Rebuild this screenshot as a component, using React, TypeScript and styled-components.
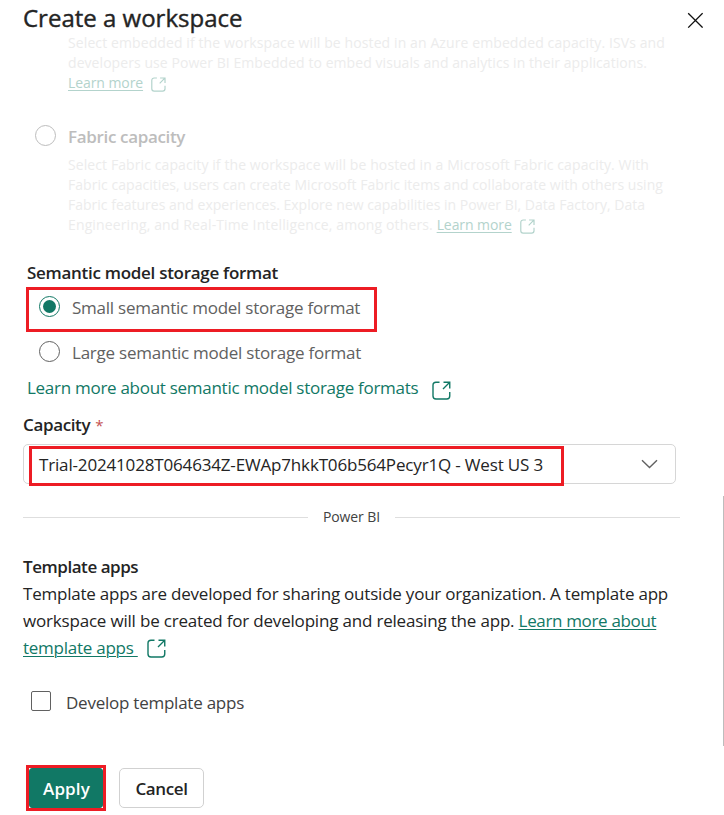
import React from 'react';
import styled, { createGlobalStyle } from 'styled-components';

const GlobalStyle = createGlobalStyle`
  * { box-sizing: border-box; }
  body { margin: 0; background: #fff; }
`;

const GREEN = '#117865';
const RED = '#ed1c24';

const Panel = styled.main`
  position: relative;
  width: 724px;
  height: 815px;
  overflow: hidden;
  display: flex;
  flex-direction: column;
  background: #fff;
  color: #242424;
  font-family: 'Open Sans', 'Noto Sans', sans-serif;
  font-size: 17px;
  line-height: 27px;
`;

const Header = styled.header`
  display: flex;
  justify-content: space-between;
  height: 33px;
  padding: 1px 21px 0 23px;
`;

const Title = styled.h1`
  margin: 0;
  font-size: 24px;
  font-weight: 500;
  line-height: 33px;
  white-space: nowrap;
  -webkit-text-stroke: 0.4px #242424;
`;

const CloseButton = styled.button`
  width: 16px;
  height: 16px;
  margin-top: 11px;
  padding: 0;
  border: 0;
  background: none;
  svg { display: block; }
`;

const Line = styled.span<{ $spacing?: number }>`
  display: block;
  white-space: pre;
  letter-spacing: ${p => p.$spacing ?? 0}px;
`;

const Run = styled.span<{ $spacing: number }>`
  letter-spacing: ${p => p.$spacing}px;
`;

const Description = styled.div`
  margin-left: 68px;
  font-size: 14px;
  line-height: 20px;
  color: #ececec;
`;

const Link = styled.a<{ $faded?: boolean; $plain?: boolean; $spacing: number }>`
  color: ${p => (p.$faded ? '#b3d3cc' : GREEN)};
  letter-spacing: ${p => p.$spacing}px;
  text-decoration: ${p => (p.$plain ? 'none' : 'underline')};
  text-decoration-thickness: 1px;
  text-underline-offset: 2px;
`;

const IconSvg = styled.svg<{ $gap: number; $drop: number }>`
  display: inline-block;
  margin-left: ${p => p.$gap}px;
  margin-bottom: -${p => p.$drop}px;
  vertical-align: baseline;
`;

const FabricOption = styled.div`
  display: flex;
  margin-top: 30px;
  margin-bottom: 5px;
  padding-left: 35px;
  color: #bdbdbd;
  font-weight: 600;
`;

const RadioDot = styled.span<{ $state?: 'checked' | 'faded'; $top: number }>`
  flex: none;
  display: grid;
  place-items: center;
  width: 21px;
  height: 21px;
  margin-top: ${p => p.$top}px;
  margin-right: 12px;
  border: 1px solid ${p => (p.$state === 'checked' ? GREEN : p.$state === 'faded' ? '#bdbdbd' : '#616161')};
  border-radius: 50%;
  &::after {
    content: '';
    width: 13px;
    height: 13px;
    border-radius: 50%;
    background: ${p => (p.$state === 'checked' ? GREEN : 'transparent')};
  }
`;

const Heading = styled.h2<{ $left: number; $top: number; $spacing: number }>`
  height: 27px;
  margin: ${p => p.$top}px 0 0 ${p => p.$left}px;
  font-size: 17px;
  font-weight: 600;
  line-height: 27px;
  letter-spacing: ${p => p.$spacing}px;
`;

const Required = styled.span`
  margin-left: 5px;
  color: #c4504f;
  font-weight: 400;
  font-size: 15px;
  line-height: 1;
`;

const HighlightedRadio = styled.label`
  display: flex;
  width: 351px;
  height: 45px;
  margin: 1px 0 0 26px;
  padding: 4px 0 0 10px;
  border: 3px solid ${RED};
  color: #616161;
`;

const RadioRow = styled.label`
  display: flex;
  margin: 7px 0 0 39px;
  color: #616161;
`;

const LearnRow = styled.div`
  height: 27px;
  margin: 8px 0 0 27px;
  white-space: pre;
`;

const Select = styled.div`
  position: relative;
  display: flex;
  align-items: flex-start;
  justify-content: space-between;
  width: 653px;
  height: 40px;
  margin: 6px 0 0 23px;
  padding: 6px 17px 0 15px;
  border: 1px solid #d6d6d6;
  border-radius: 5px;
`;

const SelectHighlight = styled.span`
  position: absolute;
  left: 5px;
  top: 1px;
  width: 535px;
  height: 40px;
  border: 3px solid ${RED};
`;

const Chevron = styled.svg`
  margin-top: 8px;
`;

const Divider = styled.div`
  display: flex;
  align-items: center;
  width: 657px;
  height: 20px;
  margin: 23px 0 0 23px;
  color: #424242;
  font-size: 14px;
  line-height: 20px;
  letter-spacing: -0.11px;
  &::before, &::after {
    content: '';
    height: 1px;
    background: #dedede;
  }
  &::before { width: 285px; margin-right: 15px; }
  &::after { flex: 1; margin-left: 15px; }
`;

const Paragraph = styled.div`
  height: 81px;
  margin-left: 23px;
`;

const CheckRow = styled.label`
  display: flex;
  margin: 28px 0 0 31px;
  color: #424242;
`;

const Checkbox = styled.span`
  width: 20px;
  height: 20px;
  margin: 2px 15px 0 0;
  border: 1px solid #616161;
  border-radius: 2px;
`;

const Footer = styled.footer`
  display: flex;
  align-items: center;
  height: 46px;
  margin: 49px 0 0 26px;
`;

const ApplyFrame = styled.div`
  width: 80px;
  height: 46px;
  border: 3px solid ${RED};
`;

const Button = styled.button<{ $primary?: boolean; $spacing: number }>`
  display: block;
  width: ${p => (p.$primary ? 74 : 85)}px;
  height: 40px;
  margin-left: ${p => (p.$primary ? 0 : 13)}px;
  padding: ${p => (p.$primary ? '1px 0 0 1px' : '1px 0 0')};
  border: 1px solid ${p => (p.$primary ? GREEN : '#d1d1d1')};
  border-radius: ${p => (p.$primary ? 3 : 5)}px;
  background: ${p => (p.$primary ? GREEN : '#fff')};
  color: ${p => (p.$primary ? '#fff' : '#242424')};
  font: 600 17px/27px 'Open Sans', 'Noto Sans', sans-serif;
  letter-spacing: ${p => p.$spacing}px;
`;

const ScrollThumb = styled.span`
  position: absolute;
  right: 0;
  top: 496px;
  width: 1px;
  height: 250px;
  background: #bdbdbd;
`;

function ExternalIcon({ size = 19, gap, drop, faded }: { size?: number; gap: number; drop: number; faded?: boolean }) {
  return (
    <IconSvg $gap={gap} $drop={drop} width={size} height={size} viewBox="0 0 19 19" fill="none"
      stroke={faded ? '#b3d3cc' : GREEN} strokeWidth={faded ? 1.5 : 1.4}>
      <path d="M7.5 1.25H4A3 3 0 0 0 1 4.25V15a3 3 0 0 0 3 3h10.75a3 3 0 0 0 3-3v-4" />
      <path d="M11.5 1.25h6.25V7.5M17.5 1.5l-6.5 6.5" />
    </IconSvg>
  );
}

export default function App() {
  return (
    <Panel>
      <GlobalStyle />
      <Header>
        <Title>Create a workspace</Title>
        <CloseButton aria-label="Close">
          <svg width="16" height="16" viewBox="0 0 16 16" stroke="#111" strokeWidth="1.3">
            <path d="M1.2 1.2l14.4 14.4M15.6 1.2L1.2 15.6" />
          </svg>
        </CloseButton>
      </Header>

      <Description>
        <Line $spacing={0.102}>Select embedded if the workspace will be hosted in an Azure embedded capacity. ISVs and</Line>
        <Line $spacing={0.064}>developers use Power BI Embedded to embed visuals and analytics in their applications.</Line>
        <Line>
          <Link $faded $spacing={-0.08}>Learn more</Link>
          <ExternalIcon size={15} gap={8} drop={4} faded />
        </Line>
      </Description>

      <FabricOption>
        <RadioDot $state="faded" $top={2} />
        <Line $spacing={-0.34}>Fabric capacity</Line>
      </FabricOption>
      <Description>
        <Line $spacing={0.091}>Select Fabric capacity if the workspace will be hosted in a Microsoft Fabric capacity. With</Line>
        <Line $spacing={0.041}>Fabric capacities, users can create Microsoft Fabric items and collaborate with others using</Line>
        <Line $spacing={0.001}>Fabric features and experiences. Explore new capabilities in Power BI, Data Factory, Data</Line>
        <Line>
          <Run $spacing={0.13}>Engineering, and Real-Time Intelligence, among others. </Run>
          <Link $faded $spacing={-0.08}>Learn more</Link>
          <ExternalIcon size={15} gap={8} drop={4} faded />
        </Line>
      </Description>

      <Heading $left={27} $top={24} $spacing={-0.288}>Semantic model storage format</Heading>
      <HighlightedRadio>
        <RadioDot $state="checked" $top={2} />
        <Line $spacing={-0.235}>Small semantic model storage format</Line>
      </HighlightedRadio>
      <RadioRow>
        <RadioDot $top={2} />
        <Line $spacing={-0.235}>Large semantic model storage format</Line>
      </RadioRow>
      <LearnRow>
        <Link $plain $spacing={-0.28}>Learn more about semantic model storage formats</Link>
        <ExternalIcon gap={14} drop={6} />
      </LearnRow>

      <Heading $left={23} $top={10} $spacing={-0.36}>Capacity<Required>*</Required></Heading>
      <Select>
        <Line $spacing={-0.165}>Trial-20241028T064634Z-EWAp7hkkT06b564Pecyr1Q - West US 3</Line>
        <Chevron width="17" height="10" viewBox="0 0 17 10" fill="none" stroke="#616161" strokeWidth="1.4">
          <path d="M1 1.2l7.5 7.3L16 1.2" />
        </Chevron>
        <SelectHighlight />
      </Select>

      <Divider>Power BI</Divider>

      <Heading $left={23} $top={26} $spacing={-0.45}>Template apps</Heading>
      <Paragraph>
        <Line $spacing={-0.217}>Template apps are developed for sharing outside your organization. A template app</Line>
        <Line>
          <Run $spacing={-0.19}>workspace will be created for developing and releasing the app. </Run>
          <Link $spacing={-0.34}>Learn more about</Link>
        </Line>
        <Line>
          <Link $spacing={-0.25}>template apps </Link>
          <ExternalIcon gap={9} drop={4} />
        </Line>
      </Paragraph>

      <CheckRow>
        <Checkbox />
        <Line $spacing={-0.243}>Develop template apps</Line>
      </CheckRow>

      <Footer>
        <ApplyFrame>
          <Button $primary $spacing={0.15}>Apply</Button>
        </ApplyFrame>
        <Button $spacing={-0.4}>Cancel</Button>
      </Footer>
      <ScrollThumb />
    </Panel>
  );
}
